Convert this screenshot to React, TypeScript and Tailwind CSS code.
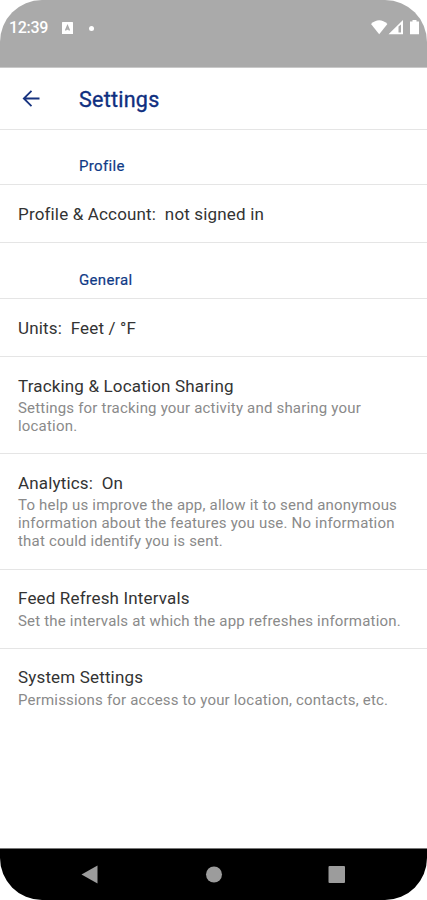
import type { ReactNode } from 'react';

interface SettingRowProps {
  title: string;
  className: string;
  children?: ReactNode;
}

function StatusBar() {
  return (
    <div className="flex h-[68px] shrink-0 items-start justify-between border-b border-[#c9c9c9] bg-[#aaaaaa] pt-[18px] pr-[6px] pl-[9px] text-white">
      <div className="flex h-5 items-center">
        <span className="w-[40px] text-[16px] leading-5 font-medium tracking-[-0.3px]">12:39</span>
        <svg className="ml-[13px]" width="11" height="12" viewBox="0 0 11 12">
          <rect width="11" height="12" rx="0.5" fill="#fff" />
          <path d="M3.5 8.5 5.5 3.7 7.5 8.5M4.5 7h2" fill="none" stroke="#aaa" strokeWidth="1.4" />
        </svg>
        <span className="ml-4 size-[5px] rounded-full bg-white" />
      </div>
      <svg className="mt-[1px]" width="50" height="17" viewBox="0 0 50 17" fill="#fff">
        <path d="M0 5Q8.2-2.5 16.4 5L8.2 15.3Z" />
        <path fillRule="evenodd" d="M17.5 15.3 32 1V15.3ZM27.5 7.5V13.5H30V5.5Z" />
        <path d="M39 2.5H41.5V1H45.5V2.5H48V15.3H39Z" />
      </svg>
    </div>
  );
}

function SectionHeader({ label, className }: { label: string; className: string }) {
  return (
    <h2 className={`shrink-0 border-b border-[#e5e5e5] pl-[79px] text-[15px] leading-5 font-normal tracking-[0.35px] text-[#0f3a86] [-webkit-text-stroke:0.2px] ${className}`}>
      {label}
    </h2>
  );
}

function SettingRow({ title, className, children }: SettingRowProps) {
  return (
    <div className={`shrink-0 border-[#e5e5e5] pl-[18px] whitespace-nowrap ${className}`}>
      <div className="text-[17px] leading-[21px] tracking-[0.16px] whitespace-pre text-[#333333]">{title}</div>
      {children && (
        <div className="text-[15px] leading-[18px] tracking-[0.19px] text-[#8a8a8a]">{children}</div>
      )}
    </div>
  );
}

export default function App() {
  return (
    <div className="h-[900px] w-[427px] overflow-hidden bg-white">
      <div className="flex h-full flex-col overflow-hidden rounded-[42px] bg-white font-['Roboto',sans-serif]">
        <StatusBar />

        <header className="flex h-[62px] shrink-0 items-center border-b border-[#e5e5e5]">
          <svg className="ml-[22px]" width="18" height="18" viewBox="0 0 18 18" fill="none" stroke="#17337f" strokeWidth="1.8">
            <path d="M17.5 8.5H2M9.5.8 1.8 8.5 9.5 16.2" />
          </svg>
          <h1 className="mt-[2px] ml-[39px] text-[21.5px] leading-7 font-normal tracking-[0.25px] text-[#0f2f80] [-webkit-text-stroke:0.35px]">
            Settings
          </h1>
        </header>

        <SectionHeader label="Profile" className="h-[55px] pt-[26px]" />
        <SettingRow title="Profile & Account:  not signed in" className="h-[58px] border-b pt-[19px]" />

        <SectionHeader label="General" className="h-[56px] pt-[27px]" />
        <SettingRow title="Units:  Feet / °F" className="h-[58px] border-b pt-[19px]" />
        <SettingRow title="Tracking & Location Sharing" className="flex h-[97px] flex-col gap-[2px] border-b pt-[19px]">
          <p>Settings for tracking your activity and sharing your</p>
          <p>location.</p>
        </SettingRow>
        <SettingRow title="Analytics:  On" className="flex h-[116px] flex-col gap-[2px] border-b pt-[19px]">
          <p>To help us improve the app, allow it to send anonymous</p>
          <p>information about the features you use. No information</p>
          <p>that could identify you is sent.</p>
        </SettingRow>
        <SettingRow title="Feed Refresh Intervals" className="flex h-[79px] flex-col gap-[3px] border-b pt-[18px]">
          <p>Set the intervals at which the app refreshes information.</p>
        </SettingRow>
        <SettingRow title="System Settings" className="flex flex-1 flex-col gap-[3px] pt-[18px]">
          <p>Permissions for access to your location, contacts, etc.</p>
        </SettingRow>

        <nav className="h-[52px] shrink-0 border-t border-[#777777] bg-black">
          <svg width="427" height="51" viewBox="0 0 427 51" fill="#9c9c9c">
            <path d="M81.5 25.5 97.5 16.5V34.5Z" />
            <circle cx="214" cy="25.5" r="8" />
            <rect x="328.5" y="17" width="16.5" height="17" rx="1" />
          </svg>
        </nav>
      </div>
    </div>
  );
}
